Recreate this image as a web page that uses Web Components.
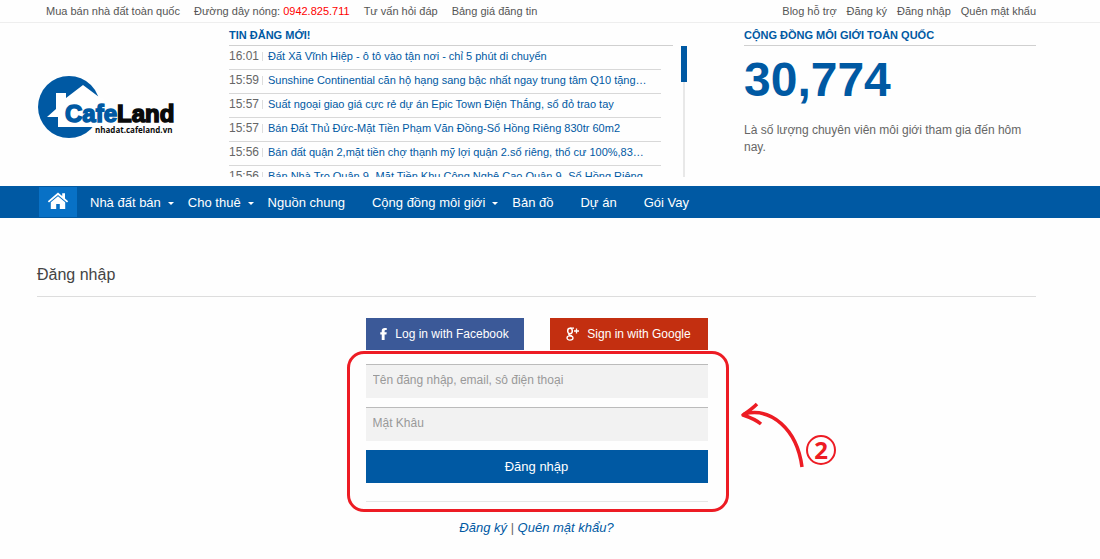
<!DOCTYPE html>
<html lang="vi">
<head>
<meta charset="utf-8">
<meta name="viewport" content="width=device-width, initial-scale=1">
<title>CafeLand - Đăng nhập</title>
<style>
  body {
    margin: 0;
    background: #fefefe;
    color: #666;
    font-family: "Liberation Sans", Arial, sans-serif;
    font-size: 12px;
    --brand: #0059a3;
    --gutter-left: 37px;
    --gutter-right: 64px;
  }
</style>
</head>
<body>
<cafe-page></cafe-page>

<script>
class BaseElement extends HTMLElement {
  connectedCallback() {
    if (this.shadowRoot) return;
    this.attachShadow({ mode: "open" }).innerHTML =
      `<style>*{box-sizing:border-box}a{color:inherit;text-decoration:none}</style>` + this.render();
  }
  render() { return "<slot></slot>"; }
}

customElements.define("top-bar", class extends BaseElement {
  render() { return `
    <style>
      :host { display: block; border-bottom: 1px solid #eee; font-size: 11px; line-height: 22px; color: #555; }
      nav { display: flex; justify-content: space-between; padding: 0 var(--gutter-right) 0 46px; }
      div { display: flex; gap: 14px; }
      div.account { gap: 10px; }
      b { color: #f00; font-weight: 400; }
    </style>
    <nav>
      <div>
        <a href="#">Mua bán nhà đất toàn quốc</a>
        <span>Đường dây nóng: <b>0942.825.711</b></span>
        <a href="#">Tư vấn hỏi đáp</a>
        <a href="#">Bảng giá đăng tin</a>
      </div>
      <div class="account">
        <a href="#">Blog hỗ trợ</a>
        <a href="#">Đăng ký</a>
        <a href="#">Đăng nhập</a>
        <a href="#">Quên mật khẩu</a>
      </div>
    </nav>`; }
});

customElements.define("cafe-logo", class extends BaseElement {
  render() { return `
    <style>
      :host { display: block; padding-top: 52px; }
      svg { display: block; }
      .name { font: 700 24px "Liberation Sans", Arial, sans-serif; stroke-width: 1.5; }
      .site { font: 700 8px "Open Sans", sans-serif; }
    </style>
    <a href="#" aria-label="CafeLand">
      <svg width="140" height="64" viewBox="0 0 140 64">
        <circle cx="31" cy="32" r="31" fill="#0059a3"/>
        <path d="M9 42 L18 34 V18 H28 V23 L45 10 L61 22 L66 24 V52 H20 V42 Z" fill="#fff"/>
        <text class="name" x="27" y="47" fill="#0059a3" stroke="#0059a3">Cafe<tspan fill="#0a0a0a" stroke="#0a0a0a">Land</tspan></text>
        <text class="site" x="57" y="58" fill="#0a0a0a">nhadat.cafeland.vn</text>
      </svg>
    </a>`; }
});

customElements.define("news-item", class extends BaseElement {
  render() { return `
    <style>
      :host { display: flex; align-items: center; height: 24px; padding-bottom: 3px; border-bottom: 1px solid #d8d8d8; }
      time { flex: none; width: 33px; color: #666; }
      a { flex: 1; min-width: 0; padding-left: 5px; color: var(--brand); font-size: 11px; line-height: 18px;
          white-space: nowrap; overflow: hidden; text-overflow: ellipsis; }
      i { flex: none; width: 1px; height: 9px; background: #ddd; }
    </style>
    <time>${this.getAttribute("time")}</time><i></i><a href="#"><slot></slot></a>`; }
});

customElements.define("panel-title", class extends BaseElement {
  render() { return `
    <style>
      :host { display: block; border-bottom: 1px solid #d0d0d0; }
      h2 { margin: 0; font-size: 11px; line-height: 20px; padding-top: 2px; color: var(--brand); }
    </style>
    <h2><slot></slot></h2>`; }
});

customElements.define("news-list", class extends BaseElement {
  render() { return `
    <style>
      :host { display: block; }
      .row { display: flex; justify-content: space-between; height: 131px; }
      panel-title { margin-right: 14px; }
      .items { width: calc(100% - 26px); overflow: hidden; }
      .track { width: 6px; display: flex; flex-direction: column; align-items: center; }
      .track::before { content: ""; width: 6px; height: 36px; background: var(--brand); }
      .track::after { content: ""; width: 2px; flex: 1; background: #e8e8e8; }
    </style>
    <panel-title>TIN ĐĂNG MỚI!</panel-title>
    <div class="row">
      <div class="items">
        <news-item time="16:01">Đất Xã Vĩnh Hiệp - ô tô vào tận nơi - chỉ 5 phút di chuyển</news-item>
        <news-item time="15:59">Sunshine Continential căn hộ hạng sang bậc nhất ngay trung tâm Q10 tặng…</news-item>
        <news-item time="15:57">Suất ngoại giao giá cực rẻ dự án Epic Town Điện Thắng, sổ đỏ trao tay</news-item>
        <news-item time="15:57">Bán Đất Thủ Đức-Mặt Tiền Phạm Văn Đồng-Sổ Hồng Riêng 830tr 60m2</news-item>
        <news-item time="15:56">Bán đất quận 2,mặt tiền chợ thạnh mỹ lợi quận 2.sổ riêng, thổ cư 100%,83…</news-item>
        <news-item time="15:56">Bán Nhà Trọ Quận 9- Mặt Tiền Khu Công Nghệ Cao Quận 9- Sổ Hồng Riêng</news-item>
      </div>
      <div class="track"></div>
    </div>`; }
});

customElements.define("broker-count", class extends BaseElement {
  render() { return `
    <style>
      :host { display: block; }
      strong { display: block; font-size: 48px; line-height: 56px; margin-top: 6px; color: var(--brand); }
      p { margin: 14px 0 0; line-height: 17px; }
    </style>
    <panel-title>CỘNG ĐỒNG MÔI GIỚI TOÀN QUỐC</panel-title>
    <strong>30,774</strong>
    <p>Là số lượng chuyên viên môi giới tham gia đến hôm nay.</p>`; }
});

customElements.define("site-header", class extends BaseElement {
  render() { return `
    <style>
      :host { display: grid; grid-template-columns: 191px minmax(0, 1fr) 292px; padding: 0 var(--gutter-right) 9px 38px; }
      news-list { margin-right: 57px; }
    </style>
    <cafe-logo></cafe-logo><news-list></news-list><broker-count></broker-count>`; }
});

customElements.define("nav-item", class extends BaseElement {
  render() { return `
    <style>
      a { display: flex; align-items: center; position: relative; white-space: nowrap; }
      :host([menu]) a::after { content: ""; position: absolute; left: calc(100% + 7px); top: 15px;
        border: 3px solid transparent; border-top-color: #fff; border-bottom: 0; }
    </style>
    <a href="#"><slot></slot></a>`; }
});

customElements.define("main-nav", class extends BaseElement {
  render() { return `
    <style>
      :host { display: block; background: var(--brand); color: #fff; font-size: 13px; line-height: 32px; }
      nav { display: flex; align-items: center; gap: 27px; padding: 1px 0 0 39px; height: 32px; }
      .home { display: flex; align-items: center; justify-content: center; align-self: flex-start; width: 38px; height: 30px;
        padding-bottom: 3px; margin-right: -14px; background: #0871c6; }
    </style>
    <nav>
      <a class="home" href="#" aria-label="Trang chủ">
        <svg width="22" height="18" viewBox="0 0 22 18" fill="#fff">
          <path d="M11 0.6 L0.8 9.2 L2 10.5 L11 3 L20 10.5 L21.2 9.2 L18 6.5 V1.2 H15.2 V4.1 Z"/>
          <path d="M11 4.2 L3.8 10.2 V17 H9.2 V12 H12.8 V17 H18.2 V10.2 Z"/>
        </svg>
      </a>
      <nav-item menu>Nhà đất bán</nav-item>
      <nav-item menu>Cho thuê</nav-item>
      <nav-item>Nguồn chung</nav-item>
      <nav-item menu>Cộng đồng môi giới</nav-item>
      <nav-item>Bản đồ</nav-item>
      <nav-item>Dự án</nav-item>
      <nav-item>Gói Vay</nav-item>
    </nav>`; }
});

customElements.define("step-marker", class extends BaseElement {
  render() { return `
    <style>
      :host { display: block; position: absolute; inset: 33px -21px -10px -19px; pointer-events: none;
        border: 3px solid #ed1c24; border-radius: 17px; }
      svg { position: absolute; left: calc(100% + 13px); top: 47px; overflow: visible; }
      text { font: 700 24px "Noto Sans", sans-serif; }
    </style>
    <svg width="100" height="70" viewBox="0 0 100 70" fill="none" stroke="#ed1c24">
      <path d="M5 13 C32 6 58 28 63 66" stroke-width="3.5"/>
      <path d="M18 3 C14 7 10 10 4 14 C10 16 16 18 22 23" stroke-width="3.5" stroke-linejoin="round"/>
      <circle cx="82" cy="49" r="14" stroke-width="2"/>
      <text x="82" y="58" text-anchor="middle" fill="#ed1c24" stroke="none">2</text>
    </svg>`; }
});

customElements.define("login-form", class extends BaseElement {
  render() { return `
    <style>
      :host { display: block; position: relative; width: 342px; margin: 0 auto; }
      .social { display: flex; justify-content: space-between; }
      button { display: flex; align-items: center; justify-content: center; height: 32px; padding: 0;
        border: 0; color: #fff; font: 13px "Liberation Sans", Arial, sans-serif; }
      .social button { width: 158px; gap: 8px; font-size: 12px; }
      .fb { background: #3b5998; }
      .gg { background: #c32f10; }
      form { display: flex; flex-direction: column; gap: 9px; margin-top: 14px; padding-bottom: 18px;
        border-bottom: 1px solid #e6e6e6; }
      input { width: 100%; height: 34px; padding: 0 7px 4px; border: 0; border-top: 1px solid #bbb;
        border-radius: 0; background: #f2f2f2; color: #555; font: 12px "Liberation Sans", Arial, sans-serif; }
      input::placeholder { color: #999; opacity: 1; }
      form button { height: 33px; background: var(--brand); }
    </style>
    <div class="social">
      <button class="fb" type="button">
        <svg width="7" height="12" viewBox="0 0 7 13" fill="#fff"><path d="M1.600 13V7H0V4.600H1.600V3C1.600 1 2.800 0 4.800 0H7V2.300H5.700C5 2.300 4.700 2.600 4.700 3.200V4.600H7L6.700 7H4.700V13Z"/></svg>
        Log in with Facebook
      </button>
      <button class="gg" type="button">
        <svg width="13" height="14" viewBox="0 0 13 14" fill="none" stroke="#fff"><ellipse cx="4" cy="4" rx="2.300" ry="2.700" stroke-width="1.500"/><ellipse cx="4" cy="11" rx="3" ry="2.100" stroke-width="1.300"/><path d="M4 1.200H8M3.500 6.700C1.500 7.800 4 8.300 6 9.300" stroke-width="1.300"/><path d="M10.500 1.500V6.500M8 4H13" stroke-width="1.300"/></svg>
        Sign in with Google
      </button>
    </div>
    <form>
      <input type="text" aria-label="Tên đăng nhập" placeholder="Tên đăng nhập, email, sô điện thoại">
      <input type="password" aria-label="Mật khẩu" placeholder="Mật Khâu">
      <button type="button">Đăng nhập</button>
    </form>
    <step-marker></step-marker>`; }
});

customElements.define("cafe-page", class extends BaseElement {
  render() { return `
    <style>
      :host { display: block; }
      main { padding: 46px var(--gutter-right) 20px var(--gutter-left); }
      h1 { margin: 0 0 21px; padding-bottom: 10px; border-bottom: 1px solid #ddd; color: #444;
        font-size: 16px; font-weight: 400; line-height: 22px; }
      p { margin: 16px 0 0; text-align: center; font-size: 13px; line-height: 20px; font-style: italic; color: #666; }
      p a { color: var(--brand); }
    </style>
    <top-bar></top-bar>
    <site-header></site-header>
    <main-nav></main-nav>
    <main>
      <h1>Đăng nhập</h1>
      <login-form></login-form>
      <p><a href="#">Đăng ký</a> | <a href="#">Quên mật khẩu?</a></p>
    </main>`; }
});
</script>
</body>
</html>
